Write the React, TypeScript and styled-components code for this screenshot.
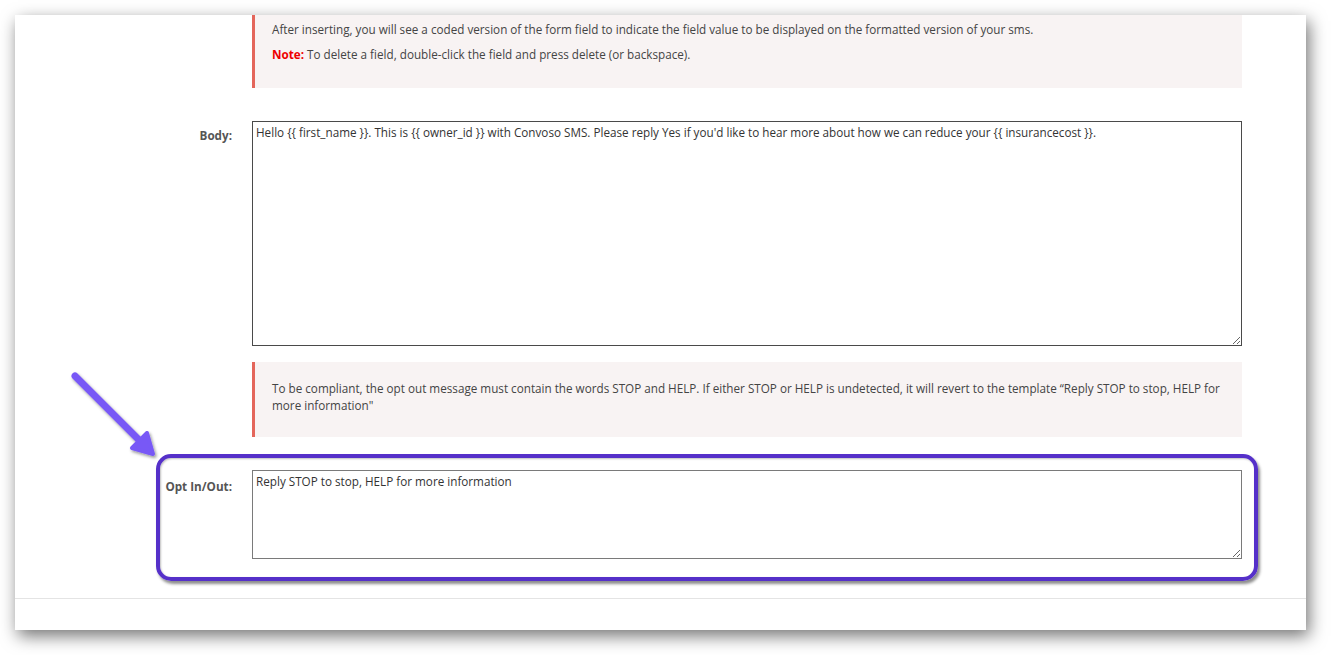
import React from 'react'
import styled, { createGlobalStyle } from 'styled-components'

const GlobalStyle = createGlobalStyle`
  html, body {
    margin: 0;
    padding: 0;
    background: #ffffff;
  }
  body {
    font-family: 'Open Sans', 'Liberation Sans', sans-serif;
    font-size: 11.7px;
    color: #444444;
  }
`

const Stage = styled.div`
  position: relative;
  width: 1331px;
  height: 655px;
  padding: 15px 0 0 15px;
  box-sizing: border-box;
  overflow: hidden;
`

const Window = styled.div`
  position: relative;
  width: 1291px;
  height: 615px;
  background: #ffffff;
  box-shadow: 3px 6px 16px rgba(0, 0, 0, 0.55);
  display: flex;
  flex-direction: column;
`

const Form = styled.div`
  display: grid;
  grid-template-columns: 237px 990px;
  align-items: start;
  flex: 1;
`

const Label = styled.label<{ $top: number }>`
  padding-right: 20px;
  padding-top: ${(p) => p.$top}px;
  text-align: right;
  font-weight: 700;
  font-size: 11.7px;
  color: #555555;
`

const Spacer = styled.div``

const Notice = styled.div<{ $top: number; $bottom: number; $gap: number }>`
  background: #f8f3f3;
  border-left: 3px solid #e4665b;
  padding: ${(p) => p.$top}px 20px ${(p) => p.$bottom}px 17px;
  margin-bottom: ${(p) => p.$gap}px;
  line-height: 17px;
  color: #444444;

  p {
    margin: 0 0 8px;
  }
  p:last-child {
    margin-bottom: 0;
  }
`

const NoteTag = styled.strong`
  color: #ee0000;
`

const Field = styled.textarea<{ $height: number; $gap: number; $border: string }>`
  display: block;
  width: 990px;
  height: ${(p) => p.$height}px;
  margin: 0 0 ${(p) => p.$gap}px;
  box-sizing: border-box;
  border: 1px solid ${(p) => p.$border};
  border-radius: 0;
  padding: 2px 3px;
  font-family: 'Open Sans', 'Liberation Sans', sans-serif;
  font-size: 11.7px;
  line-height: 16px;
  color: #333333;
  background: #ffffff;
  outline: none;
`

const Divider = styled.div`
  height: 1px;
  background: #e4e4e4;
  margin-bottom: 31px;
`

const Highlight = styled.div`
  position: absolute;
  left: 141px;
  top: 439px;
  width: 1102px;
  height: 127px;
  box-sizing: border-box;
  border: 4px solid #5530c9;
  border-radius: 15px;
  box-shadow: 2px 3px 3px rgba(0, 0, 0, 0.45), inset 1px 1px 2px rgba(0, 0, 0, 0.25);
  pointer-events: none;
`

const Pointer = styled.svg`
  position: absolute;
  left: 55px;
  top: 355px;
  overflow: visible;
  pointer-events: none;
`

const Arrow = () => (
  <Pointer width="110" height="110" viewBox="0 0 110 110">
    <defs>
      <filter id="arrowShadow" x="-20%" y="-20%" width="150%" height="150%">
        <feDropShadow dx="1.5" dy="2" stdDeviation="1.5" floodColor="#000" floodOpacity="0.4" />
      </filter>
    </defs>
    <g filter="url(#arrowShadow)" stroke="#7859f6" strokeLinecap="round" strokeLinejoin="round" fill="#7859f6">
      <line x1="20" y1="21" x2="93" y2="94" strokeWidth="7" />
      <polygon points="98,99 92,78 77,93" strokeWidth="4" />
    </g>
  </Pointer>
)

const bodyText =
  "Hello {{ first_name }}. This is {{ owner_id }} with Convoso SMS. Please reply Yes if you'd like to hear more about how we can reduce your {{ insurancecost }}."

export default function App() {
  return (
    <>
      <GlobalStyle />
      <Stage>
        <Window>
          <Form>
            <Spacer />
            <Notice $top={6} $bottom={25} $gap={32}>
              <p>
                After inserting, you will see a coded version of the form field to indicate the field value to be
                displayed on the formatted version of your sms.
              </p>
              <p>
                <NoteTag>Note:</NoteTag> To delete a field, double-click the field and press delete (or backspace).
              </p>
            </Notice>

            <Label htmlFor="body" $top={6}>Body:</Label>
            <Field id="body" $height={225} $gap={14} $border="#4a4a4a" defaultValue={bodyText} />

            <Spacer />
            <Notice $top={18} $bottom={23} $gap={32}>
              <p>
                To be compliant, the opt out message must contain the words STOP and HELP. If either STOP or HELP is
                undetected, it will revert to the template “Reply STOP to stop, HELP for more information"
              </p>
            </Notice>

            <Label htmlFor="optout" $top={8}>Opt In/Out:</Label>
            <Field
              id="optout"
              $height={89}
              $gap={38}
              $border="#7a7a7a"
              defaultValue="Reply STOP to stop, HELP for more information"
            />
          </Form>
          <Divider />
          <Highlight />
        </Window>
        <Arrow />
      </Stage>
    </>
  )
}
